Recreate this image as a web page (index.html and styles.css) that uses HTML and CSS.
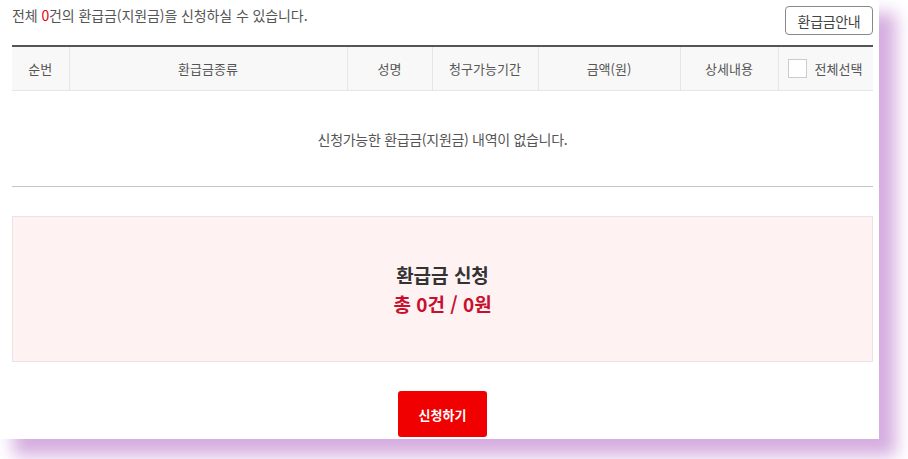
FILE: index.html
```html
<!DOCTYPE html>
<html lang="ko">
<head>
<meta charset="utf-8">
<link rel="stylesheet" href="styles.css">
</head>
<body>
<div class="panel">
  <div class="topbar">
    <p class="summary">전체 <span class="red">0</span>건의 환급금(지원금)을 신청하실 수 있습니다.</p>
    <button class="guide">환급금안내</button>
  </div>
  <table class="list">
    <colgroup>
      <col style="width:57px"><col style="width:278px"><col style="width:85px"><col style="width:106px"><col style="width:142px"><col style="width:98px"><col>
    </colgroup>
    <thead>
      <tr>
        <th>순번</th><th>환급금종류</th><th>성명</th><th>청구가능기간</th><th>금액(원)</th><th>상세내용</th>
        <th class="sel"><span class="chk"></span>전체선택</th>
      </tr>
    </thead>
    <tbody>
      <tr><td colspan="7" class="empty">신청가능한 환급금(지원금) 내역이 없습니다.</td></tr>
    </tbody>
  </table>
  <div class="total">
    <div class="t-title">환급금 신청</div>
    <div class="t-sum">총 0건 / 0원</div>
  </div>
  <div class="actions"><button class="apply">신청하기</button></div>
</div>
</body>
</html>
```
FILE: styles.css
```css
html, body { margin: 0; padding: 0; background: #fff; }
body { font-family: "Noto Sans CJK KR", "Noto Sans", sans-serif; color: #555; padding-bottom: 20px; }
.panel {
  width: 879px; height: 439px; box-sizing: border-box;
  padding: 0 6px 0 12px; background: #fff;
  box-shadow: 15px 15px 16px 2px #d6aee0;
}
.topbar { height: 45px; display: flex; justify-content: space-between; align-items: flex-start; }
.summary { margin: 5px 0 0; font-size: 14px; line-height: 20px; color: #555; letter-spacing: -0.1px; }
.red { color: #e60012; }
.guide {
  margin-top: 6px; width: 88px; height: 29px; background: #fff;
  border: 1px solid #888; border-radius: 4px; font-family: inherit;
  font-size: 14px; color: #444; padding: 0; letter-spacing: -0.3px;
}
.list { width: 100%; border-collapse: collapse; table-layout: fixed; border-top: 2px solid #555; }
.list th {
  height: 43px; background: #f8f8f8; font-weight: normal; font-size: 13px; color: #555;
  border-left: 1px solid #e6e6e6; border-bottom: 1px solid #e6e6e6; padding: 0;
}
.list th:first-child { border-left: none; }
.list th.sel { text-align: left; padding-left: 9px; }
.chk {
  display: inline-block; width: 17px; height: 17px; border: 1px solid #ccc; background: #fff;
  vertical-align: middle; margin-right: 8px; margin-top: -2px;
}
.empty {
  height: 95px; text-align: center; font-size: 14px; color: #555; padding: 0;
  border-bottom: 1px solid #c4c4c4; letter-spacing: -0.3px;
}
.total {
  margin-top: 29px; height: 146px; box-sizing: border-box; background: #fff2f3; border: 1px solid #ebe3e3;
  display: flex; flex-direction: column; align-items: center; justify-content: center;
}
.t-title { font-size: 19px; font-weight: bold; color: #333; line-height: 28px; }
.t-sum { font-size: 19px; font-weight: bold; color: #c8102e; line-height: 28px; margin-top: 1px; }
.actions { display: flex; justify-content: center; margin-top: 29px; }
.apply {
  width: 89px; height: 46px; background: #f00000; color: #fff; border: none; border-radius: 3px;
  font-family: inherit; font-size: 13px; font-weight: bold; padding: 0;
}
```
